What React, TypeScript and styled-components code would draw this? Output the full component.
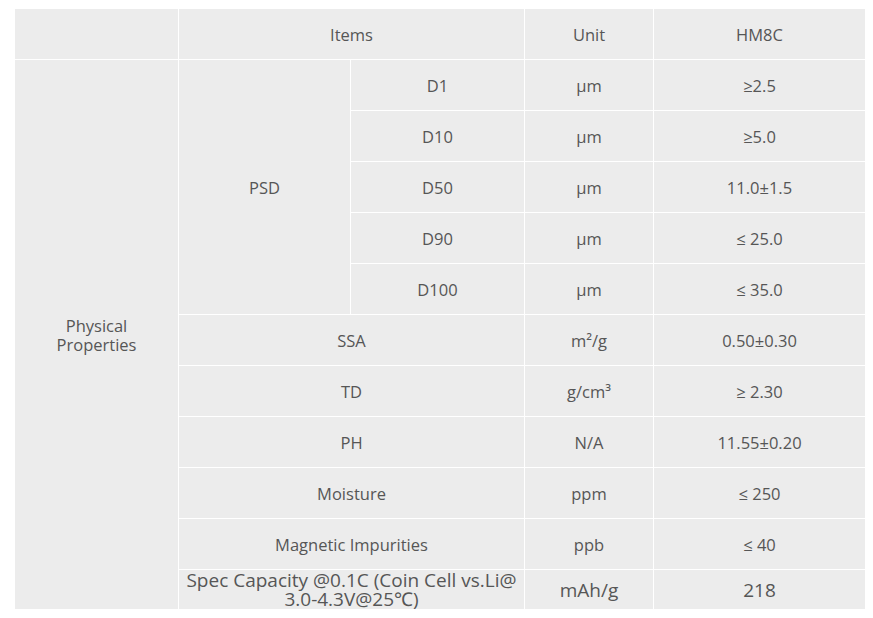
import React from "react";
import styled, { createGlobalStyle } from "styled-components";

const Global = createGlobalStyle`
  html, body { margin: 0; padding: 0; background: #ffffff; }
  body { font-family: "Open Sans", "Noto Sans", "Noto Sans CJK SC", sans-serif; }
`;

const Wrap = styled.div`
  padding: 8px 0 0 14px;
`;

const Table = styled.table`
  border-collapse: separate;
  border-spacing: 1px;
  background: #ffffff;
  table-layout: fixed;
  width: 852px;
`;

const Cell = styled.td<{ $big?: boolean; $h?: number }>`
  background: #ececec;
  color: #565656;
  padding: 1px 0 0;
  height: ${(p) => (p.$h ?? 49)}px;
  text-align: center;
  vertical-align: middle;
  font-size: ${(p) => (p.$big ? 19 : 16.5)}px;
  line-height: 19px;
`;

type Row = { item: string; unit: string; value: string };

const psd: Row[] = [
  { item: "D1", unit: "μm", value: "≥2.5" },
  { item: "D10", unit: "μm", value: "≥5.0" },
  { item: "D50", unit: "μm", value: "11.0±1.5" },
  { item: "D90", unit: "μm", value: "≤ 25.0" },
  { item: "D100", unit: "μm", value: "≤ 35.0" },
];

const others: Row[] = [
  { item: "SSA", unit: "m²/g", value: "0.50±0.30" },
  { item: "TD", unit: "g/cm³", value: "≥ 2.30" },
  { item: "PH", unit: "N/A", value: "11.55±0.20" },
  { item: "Moisture", unit: "ppm", value: "≤ 250" },
  { item: "Magnetic Impurities", unit: "ppb", value: "≤ 40" },
];

export default function App() {
  return (
    <>
      <Global />
      <Wrap>
        <Table>
          <colgroup>
            <col style={{ width: 163 }} />
            <col style={{ width: 171 }} />
            <col style={{ width: 173 }} />
            <col style={{ width: 128 }} />
            <col style={{ width: 211 }} />
          </colgroup>
          <tbody>
            <tr>
              <Cell />
              <Cell colSpan={2}>Items</Cell>
              <Cell>Unit</Cell>
              <Cell>HM8C</Cell>
            </tr>
            {psd.map((r, i) => (
              <tr key={r.item}>
                {i === 0 && <Cell rowSpan={11}>Physical<br />Properties</Cell>}
                {i === 0 && <Cell rowSpan={5}>PSD</Cell>}
                <Cell>{r.item}</Cell>
                <Cell>{r.unit}</Cell>
                <Cell>{r.value}</Cell>
              </tr>
            ))}
            {others.map((r) => (
              <tr key={r.item}>
                <Cell colSpan={2}>{r.item}</Cell>
                <Cell>{r.unit}</Cell>
                <Cell>{r.value}</Cell>
              </tr>
            ))}
            <tr>
              <Cell colSpan={2} $big $h={38}>
                Spec Capacity @0.1C (Coin Cell vs.Li@<br />3.0-4.3V@25℃)
              </Cell>
              <Cell $big $h={38}>mAh/g</Cell>
              <Cell $big $h={38}>218</Cell>
            </tr>
          </tbody>
        </Table>
      </Wrap>
    </>
  );
}
